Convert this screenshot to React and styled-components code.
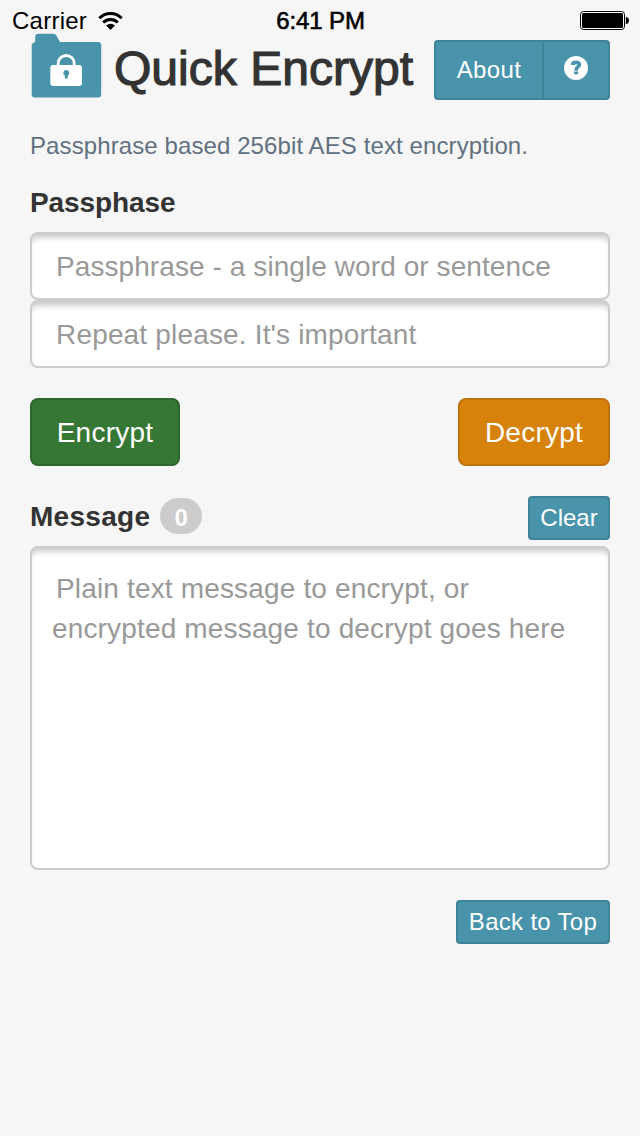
import React from 'react';
import styled, { createGlobalStyle } from 'styled-components';

const GlobalStyle = createGlobalStyle`
  *, *::before, *::after { box-sizing: border-box; }
  html, body { margin: 0; padding: 0; background: #f6f6f6; }
  body, input, textarea, button {
    font-family: "Liberation Sans", Arial, sans-serif;
  }
`;

const Screen = styled.div`
  width: 640px;
  height: 1136px;
  background: #f6f6f6;
  color: #333;
  overflow: hidden;
`;

const StatusBar = styled.div`
  display: grid;
  grid-template-columns: 1fr auto 1fr;
  align-items: center;
  height: 40px;
  padding: 1px 11px 0 12px;
  font-size: 24px;
  line-height: 40px;
  color: #000;
`;

const Carrier = styled.div`
  display: flex;
  align-items: center;
  gap: 11px;
  letter-spacing: 0.25px;
`;

const Clock = styled.div`
  letter-spacing: -0.1px;
  -webkit-text-stroke: 0.6px #000;
`;

const BatteryIcon = styled.svg`
  justify-self: end;
  width: 49px;
  height: 20px;
  margin-top: -2px;
`;

const WifiIcon = styled.svg`
  width: 25px;
  height: 18px;
  margin-top: -1px;
`;

const Content = styled.main`
  display: flex;
  flex-direction: column;
  padding: 0 30px;
`;

const Header = styled.header`
  display: flex;
  align-items: center;
  height: 60px;
`;

const Logo = styled.svg`
  width: 72px;
  height: 66px;
  margin-top: -8px;
  overflow: visible;
`;

const Title = styled.h1`
  margin: -2px 0 0 12px;
  font-size: 48px;
  line-height: 60px;
  font-weight: 400;
  letter-spacing: 0.03px;
  white-space: nowrap;
  color: #333;
  -webkit-text-stroke: 1.2px #333;
`;

const ButtonGroup = styled.div`
  display: flex;
  margin-left: auto;
`;

const palettes = {
  info: ['#4993ab', '#3f8399'],
  success: ['#377736', '#2d662c'],
  warning: ['#d6820b', '#be7209'],
};

const Button = styled.button`
  display: flex;
  align-items: center;
  justify-content: center;
  width: ${(p) => p.$width}px;
  height: ${(p) => p.$height}px;
  padding: ${(p) => p.$padTop || 0}px 0 0;
  border: 2px solid ${(p) => palettes[p.$tone][1]};
  border-radius: ${(p) => p.$radius || '4px'};
  background: ${(p) => palettes[p.$tone][0]};
  color: #fff;
  font-size: ${(p) => p.$size || 24}px;
  letter-spacing: ${(p) => p.$spacing || 0}px;
  white-space: nowrap;
`;

const HelpButton = styled(Button)`
  margin-left: -2px;
  padding-bottom: 4px;
`;

const Lead = styled.p`
  margin: 30px 0 0;
  font-size: 24px;
  line-height: 32px;
  letter-spacing: 0.1px;
  color: #617080;
`;

const Label = styled.label`
  font-size: 28px;
  line-height: 40px;
  font-weight: 700;
  letter-spacing: ${(p) => p.$spacing || 0}px;
  color: #333;
`;

const PassLabel = styled(Label)`
  margin: 21px 0 9px;
`;

const fieldStyles = `
  display: block;
  width: 100%;
  border: 2px solid #ccc;
  border-radius: 8px;
  background: #fff;
  box-shadow: inset 0 7px 6px -4px rgba(0, 0, 0, 0.24);
  color: #555;
  font-size: 28px;
  outline: none;
  resize: none;
  &::placeholder { color: #999; opacity: 1; }
`;

const Field = styled.input`
  ${fieldStyles}
  height: 68px;
  padding: 2px 24px 0;
  letter-spacing: ${(p) => p.$spacing}px;
`;

const MessageField = styled.textarea`
  ${fieldStyles}
  height: 324px;
  margin-top: 6px;
  padding: 21px 20px 19px;
  line-height: 40px;
  letter-spacing: 0.16px;
  text-indent: 4px;
  overflow: hidden;
`;

const Row = styled.div`
  display: flex;
  justify-content: space-between;
  margin-top: 30px;
`;

const LabelGroup = styled.div`
  display: flex;
  align-items: center;
  gap: 10px;
  height: 40px;
`;

const MessageLabel = styled(Label)`
  padding-top: 2px;
`;

const Badge = styled.span`
  display: flex;
  align-items: center;
  justify-content: center;
  width: 42px;
  height: 36px;
  padding-top: 3px;
  border-radius: 18px;
  background: #ccc;
  color: #fff;
  font-size: 24px;
  font-weight: 700;
`;

const Footer = styled.div`
  display: flex;
  justify-content: flex-end;
  margin-top: 30px;
`;

function Wifi() {
  return (
    <WifiIcon viewBox="0 0 25 18">
      <g fill="none" stroke="#000" strokeWidth="2.9">
        <path d="M1.300 6.300a15.600 15.600 0 0 1 22.400 0" />
        <path d="M5.200 10.500a10.300 10.300 0 0 1 14.600 0" />
      </g>
      <path d="M12.500 18 8.100 13.500a6.400 6.400 0 0 1 8.800 0z" />
    </WifiIcon>
  );
}

function Battery() {
  return (
    <BatteryIcon viewBox="0 0 49 20">
      <rect x="0.500" y="1.500" width="44" height="18" rx="3" fill="#fff" stroke="#000" />
      <rect x="2" y="3" width="41" height="15" rx="1.5" />
      <path d="M45.800 7c2 0 3.200 1.500 3.200 3.500s-1.200 3.500-3.200 3.500z" />
    </BatteryIcon>
  );
}

function FolderLock() {
  return (
    <Logo viewBox="0 0 72 66">
      <path
        d="M9 .8h14q2.500 0 3.500 2l3.500 6.200H68q3.200 0 3.200 3V61.500q0 3-3 3H5q-3.300 0-3.300-3V12.500q0-2.500 3.500-3.500V4Q5.200.8 9 .8z"
        fill="#4993ab"
      />
      <path d="M28.200 34v-3.500a8 8 0 0 1 16 0V34" fill="none" stroke="#fff" strokeWidth="2.800" />
      <rect x="20.300" y="32" width="31.700" height="21" rx="3" fill="#fff" />
      <path d="M36.300 37a3 3 0 0 1 1.500 5.600V45.500h-3v-2.900a3 3 0 0 1 1.500-5.600z" fill="#4993ab" />
    </Logo>
  );
}

function HelpIcon() {
  return (
    <svg width="24" height="24" viewBox="0 0 24 24">
      <circle cx="12" cy="12" r="12" fill="#fff" />
      <path d="M8.500 9q.2-2.600 3.400-2.600t3.400 2.300q0 1.400-1.600 2.300T12 14.600" fill="none" stroke="#4993ab" strokeWidth="3.700" />
      <rect x="10.100" y="15.500" width="4" height="2.900" fill="#4993ab" />
    </svg>
  );
}

export default function App() {
  return (
    <>
      <GlobalStyle />
      <Screen>
        <StatusBar>
          <Carrier>Carrier<Wifi /></Carrier>
          <Clock>6:41 PM</Clock>
          <Battery />
        </StatusBar>
        <Content>
          <Header>
            <FolderLock />
            <Title>Quick Encrypt</Title>
            <ButtonGroup>
              <Button $tone="info" $width={110} $height={60} $radius="4px 0 0 4px" $spacing={0.4}>About</Button>
              <HelpButton $tone="info" $width={68} $height={60} $radius="0 4px 4px 0" aria-label="Help">
                <HelpIcon />
              </HelpButton>
            </ButtonGroup>
          </Header>
          <Lead>Passphrase based 256bit AES text encryption.</Lead>
          <PassLabel htmlFor="pass" $spacing={-0.1}>Passphase</PassLabel>
          <Field id="pass" $spacing={0.08} placeholder="Passphrase - a single word or sentence" />
          <Field $spacing={0.17} placeholder="Repeat please. It's important" />
          <Row>
            <Button $tone="success" $width={150} $height={68} $radius="8px" $size={28} $spacing={0.25} $padTop={2}>Encrypt</Button>
            <Button $tone="warning" $width={152} $height={68} $radius="8px" $size={28} $spacing={0.25} $padTop={2}>Decrypt</Button>
          </Row>
          <Row>
            <LabelGroup>
              <MessageLabel htmlFor="message" $spacing={0.28}>Message</MessageLabel>
              <Badge>0</Badge>
            </LabelGroup>
            <Button $tone="info" $width={82} $height={44}>Clear</Button>
          </Row>
          <MessageField
            id="message"
            placeholder={'Plain text message to encrypt, or encrypted message to decrypt goes here'}
          />
          <Footer>
            <Button $tone="info" $width={154} $height={44} $spacing={0.3}>Back to Top</Button>
          </Footer>
        </Content>
      </Screen>
    </>
  );
}
